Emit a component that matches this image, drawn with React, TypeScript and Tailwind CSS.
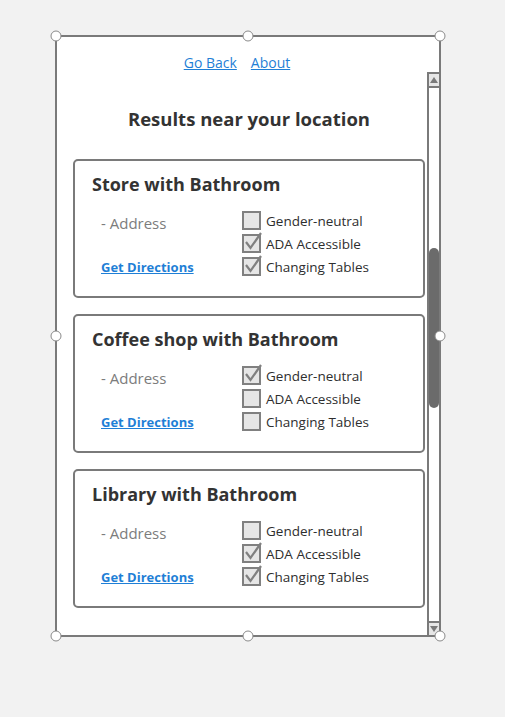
import React from 'react';

type Place = {
	name: string;
	checks: [boolean, boolean, boolean];
};

const places: Place[] = [
	{ name: 'Store with Bathroom', checks: [false, true, true] },
	{ name: 'Coffee shop with Bathroom', checks: [true, false, false] },
	{ name: 'Library with Bathroom', checks: [false, true, true] },
];

const labels = ['Gender-neutral', 'ADA Accessible', 'Changing Tables'];

function CheckBox({ checked }: { checked: boolean }) {
	return (
		<svg width="22" height="22" viewBox="0 0 22 22" className="shrink-0 -mt-[4px]">
			<rect x="1" y="4" width="17" height="17" fill="#e6e6e6" stroke="#808080" strokeWidth="2" />
			{checked && (
				<path d="M4 11 L8.5 17 L19 2" fill="none" stroke="#808080" strokeWidth="2.2" />
			)}
		</svg>
	);
}

function Handle({ className }: { className: string }) {
	return (
		<div
			className={`absolute w-[11px] h-[11px] rounded-full bg-white border border-[#8a8a8a] -translate-x-1/2 -translate-y-1/2 ${className}`}
		/>
	);
}

function ResultCard({ place }: { place: Place }) {
	return (
		<div className="h-[139px] border-2 border-[#7a7a7a] rounded-[5px] bg-white pl-[17px] pt-[11px]">
			<h2 className="text-[18px] leading-[24px] font-bold text-[#333]">{place.name}</h2>
			<div className="flex mt-[14px]">
				<div className="w-[150px] pl-[9px] flex flex-col">
					<span className="text-[15px] leading-[20px] text-[#7c7c7c] mt-[3px]">- Address</span>
					<a href="#" className="text-[13px] leading-[18px] font-bold text-[#1f7fd6] underline mt-[25px]">
						Get Directions
					</a>
				</div>
				<div className="flex flex-col gap-[5px] pt-[2px]">
					{labels.map((label, i) => (
						<div key={label} className="flex items-start gap-[2px] h-[18px]">
							<CheckBox checked={place.checks[i]} />
							<span className="text-[13.5px] leading-[18px] text-[#2e2e2e]">{label}</span>
						</div>
					))}
				</div>
			</div>
		</div>
	);
}

export default function App() {
	return (
		<div
			className="w-[505px] h-[717px] bg-[#f2f2f2] pt-[35px] pl-[55px]"
			style={{ fontFamily: '"Open Sans", "Noto Sans", sans-serif' }}
		>
			<div className="relative w-[386px] h-[602px] border-2 border-[#7a7a7a] bg-white flex">
				{/* Content */}
				<div className="flex-1 flex flex-col">
					<div className="flex justify-center gap-[14px] pt-[16px] pr-[10px] text-[14px] leading-[20px]">
						<a href="#" className="text-[#1f7fd6] underline">Go Back</a>
						<a href="#" className="text-[#1f7fd6] underline">About</a>
					</div>
					<h1 className="text-center text-[18.5px] leading-[26px] font-bold text-[#333] mt-[33px] pl-[14px]">
						Results near your location
					</h1>
					<div className="flex flex-col gap-[16px] mt-[27px] ml-[16px] mr-[2px]">
						{places.map((p) => (
							<ResultCard key={p.name} place={p} />
						))}
					</div>
				</div>

				{/* Scrollbar */}
				<div className="w-[12px] mt-[35px] border-l-2 border-t-2 border-[#7a7a7a] flex flex-col">
					<div className="h-[14px] bg-[#e6e6e6] border-b-2 border-[#7a7a7a] flex items-center justify-center">
						<div className="w-0 h-0 border-l-[4px] border-r-[4px] border-b-[6px] border-l-transparent border-r-transparent border-b-[#7a7a7a]" />
					</div>
					<div className="flex-1 flex flex-col pt-[160px]">
						<div className="h-[160px] bg-[#6b6b6b] rounded-[6px]" />
						<div className="flex-1" />
					</div>
					<div className="h-[14px] bg-[#e6e6e6] border-t-2 border-[#7a7a7a] flex items-center justify-center">
						<div className="w-0 h-0 border-l-[4px] border-r-[4px] border-t-[6px] border-l-transparent border-r-transparent border-t-[#7a7a7a]" />
					</div>
				</div>

				{/* Selection handles */}
				<Handle className="left-[-1px] top-[-1px]" />
				<Handle className="left-1/2 top-[-1px]" />
				<Handle className="left-[calc(100%+1px)] top-[-1px]" />
				<Handle className="left-[-1px] top-1/2" />
				<Handle className="left-[calc(100%+1px)] top-1/2" />
				<Handle className="left-[-1px] top-[calc(100%+1px)]" />
				<Handle className="left-1/2 top-[calc(100%+1px)]" />
				<Handle className="left-[calc(100%+1px)] top-[calc(100%+1px)]" />
			</div>
		</div>
	);
}
